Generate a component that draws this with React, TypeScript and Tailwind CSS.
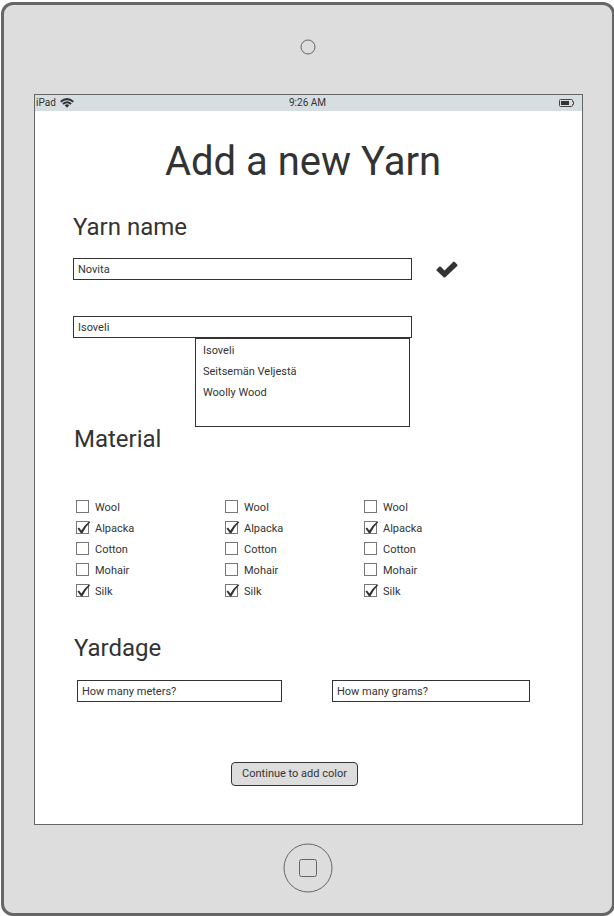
const materials = [
  { name: 'Wool', checked: false },
  { name: 'Alpacka', checked: true },
  { name: 'Cotton', checked: false },
  { name: 'Mohair', checked: false },
  { name: 'Silk', checked: true },
];

function Field({ value, className }: { value: string; className: string }) {
  return (
    <div className={`flex h-[22px] items-center border border-[#333] bg-white pl-1 ${className}`}>
      {value}
    </div>
  );
}

function Heading({ children, className }: { children: string; className: string }) {
  return <h2 className={`h-7 text-2xl leading-7 ${className}`}>{children}</h2>;
}

function Checkbox({ name, checked }: { name: string; checked: boolean }) {
  return (
    <li className="flex h-[21px] items-center">
      <svg className="mr-1 shrink-0" width="15" height="15" viewBox="0 0 15 15" fill="none">
        <rect x="0.5" y="1.5" width="12" height="12" fill="#fff" stroke="#777" />
        {checked && (
          <path d="M1.5 8.6 3 7.6 5.4 10.6Q8.5 5 13 1.4L14.4 1.9Q9.5 6.5 6.4 13.2L4.9 13.3Z" fill="#333" />
        )}
      </svg>
      <span className="pt-0.5">{name}</span>
    </li>
  );
}

function MaterialList({ className }: { className: string }) {
  return (
    <ul className={className}>
      {materials.map((m) => (
        <Checkbox key={m.name} name={m.name} checked={m.checked} />
      ))}
    </ul>
  );
}

function StatusBar() {
  return (
    <div className="grid h-4 grid-cols-3 items-center bg-[#d6dee1] text-[10px] leading-4">
      <div className="flex items-center gap-1 pl-px">
        <span>iPad</span>
        <svg width="14" height="10" viewBox="0 0 14 10" fill="none" stroke="#333" strokeWidth="2">
          <path d="M.7 3.8Q7-1.5 13.3 3.8" />
          <path d="M2.9 6.1Q7 2.5 11.1 6.1" />
          <path d="M4.7 7.2Q7 5.3 9.3 7.2L7 9.8Z" fill="#333" stroke="none" />
        </svg>
      </div>
      <span className="pr-0.5 text-center">9:26 AM</span>
      <svg className="mr-2 justify-self-end" width="15" height="8" viewBox="0 0 15 8" fill="none">
        <path d="M1.5.5H12.5Q13.5.5 13.5 1.5V2.5H14.5V5.5H13.5V6.5Q13.5 7.5 12.5 7.5H1.5Q.5 7.5.5 6.5V1.5Q.5.5 1.5.5Z" stroke="#444" />
        <rect x="2" y="2" width="8" height="4" fill="#333" />
      </svg>
    </div>
  );
}

export default function App() {
  return (
    <div className="h-[916px] w-[614px] overflow-hidden bg-white pt-0.5 pl-px font-['Roboto',sans-serif] text-[11px] leading-[21px] text-[#333]">
      <div className="flex h-[914px] w-[614px] flex-col rounded-[12px] border-[3px] border-[#666] bg-[#ddd]">
        <div className="flex h-[89px] shrink-0 justify-center pt-[34px]">
          <svg width="16" height="16" viewBox="0 0 16 16" fill="none">
            <circle cx="8" cy="8" r="7" stroke="#666" />
          </svg>
        </div>

        <main className="ml-[30px] flex h-[731px] w-[549px] shrink-0 flex-col border border-[#666] bg-white">
          <StatusBar />
          <h1 className="mt-[27px] h-12 pr-[11px] text-center text-[40px] leading-[48px]">Add a new Yarn</h1>

          <Heading className="mt-[27px] ml-[38px]">Yarn name</Heading>
          <div className="mt-[17px] ml-[38px] flex items-center">
            <Field value="Novita" className="w-[339px]" />
            <svg className="ml-6" width="22" height="17" viewBox="0 0 22 17">
              <path d="M.8 8.2 3.2 5.8Q4 5 4.8 5.8L8.5 9.5 17.1.9Q17.9.1 18.7.9L21.2 3.4Q22 4.2 21.2 5L9.3 16.2Q8.5 17 7.7 16.2L.8 9.8Q0 9 .8 8.2Z" fill="#333" />
            </svg>
          </div>

          <div className="relative mt-9 ml-[38px] w-[339px]">
            <Field value="Isoveli" className="w-full" />
            <ul className="absolute top-full left-[122px] h-[89px] w-[215px] border border-[#333] bg-white pt-px pl-[7px]">
              <li>Isoveli</li>
              <li>Seitsemän Veljestä</li>
              <li>Woolly Wood</li>
            </ul>
          </div>

          <Heading className="mt-[87px] ml-[39px]">Material</Heading>
          <div className="mt-[43px] ml-[41px] flex">
            <MaterialList className="w-[149px]" />
            <MaterialList className="w-[139px]" />
            <MaterialList className="w-[139px]" />
          </div>

          <Heading className="mt-[33px] ml-[39px]">Yardage</Heading>
          <div className="mt-[18px] ml-[42px] flex gap-[50px]">
            <Field value="How many meters?" className="w-[205px]" />
            <Field value="How many grams?" className="w-[198px]" />
          </div>

          <button className="mt-[60px] ml-[196px] h-6 w-[127px] rounded-[4px] border border-[#333] bg-[#ddd] leading-5">
            Continue to add color
          </button>
        </main>

        <div className="flex justify-center pt-[18px]">
          <svg width="50" height="50" viewBox="0 0 50 50" fill="none" stroke="#666">
            <circle cx="25" cy="25" r="24" />
            <rect x="16.5" y="16.5" width="17" height="17" rx="2" />
          </svg>
        </div>
      </div>
    </div>
  );
}
